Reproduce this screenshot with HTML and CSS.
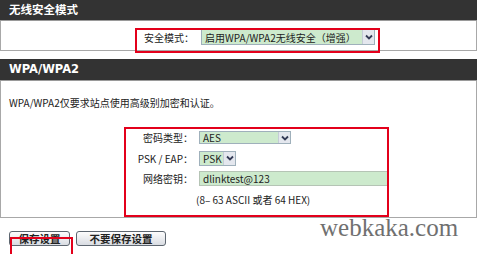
FILE: index.html
```html
<!DOCTYPE html>
<html lang="zh-CN">
<head>
    <meta charset="UTF-8">
    <title>无线安全设置</title>
    <link rel="stylesheet" href="styles.css">
</head>
<body>
<div class="page">
    <div class="panel">
        <div class="panel-head">无线安全模式</div>
        <div class="panel-body mode-row">
            <span class="field-label">安全模式：</span>
            <span class="select select-mode">启用WPA/WPA2无线安全（增强）<i class="arrow"></i></span>
        </div>
        <div class="mark mark-mode"></div>
    </div>

    <div class="panel panel-wpa">
        <div class="panel-head">WPA/WPA2</div>
        <div class="panel-body wpa-body">
            <p class="desc">WPA/WPA2仅要求站点使用高级别加密和认证。</p>
            <div class="form-grid">
                <span class="field-label">密码类型：</span>
                <span class="select select-cipher">AES<i class="arrow"></i></span>

                <span class="field-label">PSK / EAP：</span>
                <span class="select select-psk">PSK<i class="arrow"></i></span>

                <span class="field-label">网络密钥：</span>
                <span class="text-input">dlinktest@123</span>

                <span></span>
                <span class="note">(8– 63 ASCII 或者 64 HEX)</span>
            </div>
        </div>
        <div class="mark mark-form"></div>
    </div>

    <div class="actions">
        <button class="btn btn-save">保存设置</button>
        <button class="btn btn-cancel">不要保存设置</button>
        <div class="mark mark-save"></div>
    </div>

    <div class="watermark">webkaka.com</div>
</div>
</body>
</html>
```

FILE: styles.css
```css
body, html {
    margin: 0;
    padding: 0;
    background-color: #fff;
    font-family: "Noto Sans CJK SC", sans-serif;
    font-size: 10px;
    color: #222;
}

.page {
    position: relative;
    width: 480px;
    height: 254px;
    overflow: hidden;
}

.panel {
    position: relative;
    width: 477px;
}

.panel-wpa {
    margin-top: 8px;
}

.panel-head {
    height: 20px;
    line-height: 20px;
    padding-left: 9px;
    background-color: #333;
    border-bottom: 1px solid #9a9a9a;
    color: #fff;
    font-family: "DejaVu Sans", "Noto Sans CJK SC", sans-serif;
    font-weight: bold;
    font-size: 11.5px;
}

.panel-wpa .panel-head {
    height: 21px;
    line-height: 21px;
}

.panel-body {
    border: 1px solid #a8a8a8;
    border-top: none;
    background-color: #fff;
}

.mode-row {
    display: flex;
    align-items: center;
    height: 16px;
    padding: 8px 0 5px 143px;
}

.field-label {
    white-space: nowrap;
    margin-right: 7px;
}

/* 下拉框 */
.select {
    display: inline-flex;
    align-items: center;
    box-sizing: border-box;
    height: 16px;
    padding-left: 3px;
    background-color: #cdeacd;
    border: 1px solid #9fb0bb;
    white-space: nowrap;
    overflow: hidden;
}

.select-mode {
    width: 174px;
}

.select-cipher {
    width: 92px;
    height: 13px;
}

.select-psk {
    width: 37px;
    height: 15px;
}

.arrow {
    flex-shrink: 0;
    margin-left: auto;
    width: 12px;
    height: 100%;
    box-sizing: border-box;
    border-left: 1px solid #c4ccd6;
    background: #e4e7ee url("data:image/svg+xml;utf8,<svg xmlns='http://www.w3.org/2000/svg' width='8' height='6'><path d='M1 1.5 L4 4.5 L7 1.5' fill='none' stroke='%23333a55' stroke-width='1.8'/></svg>") no-repeat center;
}

.wpa-body {
    padding: 15px 8px 10px;
}

.desc {
    margin: 0;
    line-height: 14px;
}

.form-grid {
    display: grid;
    grid-template-columns: 190px 189px;
    grid-auto-rows: 16px;
    row-gap: 4.5px;
    align-items: center;
    margin-top: 19.5px;
}

.form-grid .field-label {
    justify-self: end;
    margin-right: 6px;
}

.text-input {
    box-sizing: border-box;
    height: 15px;
    line-height: 13px;
    padding-left: 3px;
    background-color: #cdeacd;
    border: 1px solid #b5c4b5;
}

.note {
    margin-left: -3px;
    white-space: nowrap;
}

.actions {
    position: relative;
    display: flex;
    gap: 6px;
    margin-top: 13px;
    padding-left: 9px;
}

.btn {
    height: 15px;
    padding: 0;
    font-family: "Noto Sans CJK SC", sans-serif;
    font-size: 10.5px;
    font-weight: bold;
    line-height: 13px;
    color: #222;
    border: 1px solid #5d6670;
    border-radius: 3px;
    background: linear-gradient(#fdfdfd, #d9dce2);
}

.btn-save {
    width: 61px;
}

.btn-cancel {
    width: 90px;
}

/* 红色标注框 */
.mark {
    position: absolute;
    border: 2px solid #e3001b;
    box-sizing: border-box;
}

.mark-mode {
    left: 135px;
    top: 28px;
    width: 245px;
    height: 25px;
}

.mark-form {
    left: 124px;
    top: 68px;
    width: 265px;
    height: 90px;
}

.mark-save {
    left: 10px;
    top: 6px;
    width: 63px;
    height: 22px;
}

.watermark {
    position: absolute;
    left: 320px;
    top: 214px;
    font-family: "Liberation Serif", serif;
    font-size: 25px;
    color: #707070;
}
```
